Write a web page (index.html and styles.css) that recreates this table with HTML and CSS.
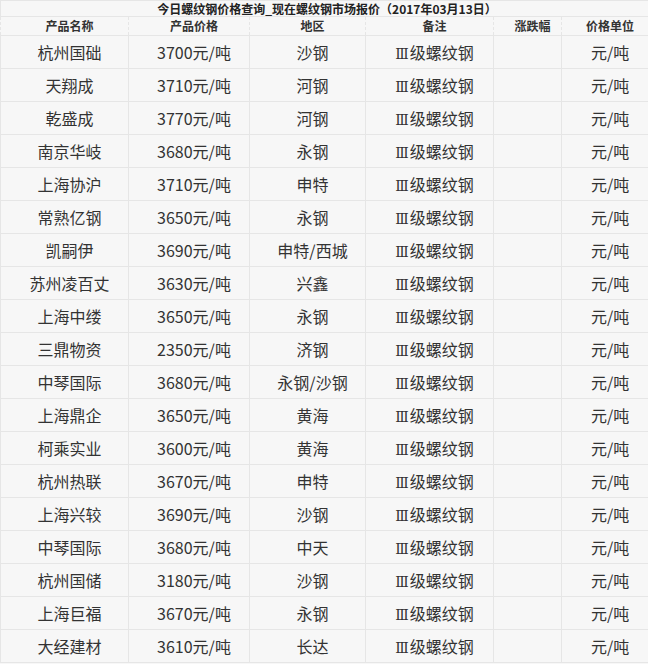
FILE: index.html
```html
<!DOCTYPE html>
<html lang="zh-CN">
<head>
<meta charset="utf-8">
<title>今日螺纹钢价格查询</title>
<link rel="stylesheet" href="styles.css">
</head>
<body>
<table class="price-table">
  <colgroup>
    <col class="c1"><col class="c2"><col class="c3"><col class="c4"><col class="c5"><col class="c6">
  </colgroup>
  <thead>
    <tr class="title-row"><th colspan="6">今日螺纹钢价格查询_现在螺纹钢市场报价（2017年03月13日）</th></tr>
    <tr class="head-row"><th>产品名称</th><th>产品价格</th><th>地区</th><th>备注</th><th>涨跌幅</th><th>价格单位</th></tr>
  </thead>
  <tbody>
    <tr><td>杭州国础</td><td>3700元/吨</td><td>沙钢</td><td><span class="roman">Ⅲ</span>级螺纹钢</td><td></td><td>元/吨</td></tr>
    <tr><td>天翔成</td><td>3710元/吨</td><td>河钢</td><td><span class="roman">Ⅲ</span>级螺纹钢</td><td></td><td>元/吨</td></tr>
    <tr><td>乾盛成</td><td>3770元/吨</td><td>河钢</td><td><span class="roman">Ⅲ</span>级螺纹钢</td><td></td><td>元/吨</td></tr>
    <tr><td>南京华岐</td><td>3680元/吨</td><td>永钢</td><td><span class="roman">Ⅲ</span>级螺纹钢</td><td></td><td>元/吨</td></tr>
    <tr><td>上海协沪</td><td>3710元/吨</td><td>申特</td><td><span class="roman">Ⅲ</span>级螺纹钢</td><td></td><td>元/吨</td></tr>
    <tr><td>常熟亿钢</td><td>3650元/吨</td><td>永钢</td><td><span class="roman">Ⅲ</span>级螺纹钢</td><td></td><td>元/吨</td></tr>
    <tr><td>凯嗣伊</td><td>3690元/吨</td><td>申特/西城</td><td><span class="roman">Ⅲ</span>级螺纹钢</td><td></td><td>元/吨</td></tr>
    <tr><td>苏州凌百丈</td><td>3630元/吨</td><td>兴鑫</td><td><span class="roman">Ⅲ</span>级螺纹钢</td><td></td><td>元/吨</td></tr>
    <tr><td>上海中缕</td><td>3650元/吨</td><td>永钢</td><td><span class="roman">Ⅲ</span>级螺纹钢</td><td></td><td>元/吨</td></tr>
    <tr><td>三鼎物资</td><td>2350元/吨</td><td>济钢</td><td><span class="roman">Ⅲ</span>级螺纹钢</td><td></td><td>元/吨</td></tr>
    <tr><td>中琴国际</td><td>3680元/吨</td><td>永钢/沙钢</td><td><span class="roman">Ⅲ</span>级螺纹钢</td><td></td><td>元/吨</td></tr>
    <tr><td>上海鼎企</td><td>3650元/吨</td><td>黄海</td><td><span class="roman">Ⅲ</span>级螺纹钢</td><td></td><td>元/吨</td></tr>
    <tr><td>柯乘实业</td><td>3600元/吨</td><td>黄海</td><td><span class="roman">Ⅲ</span>级螺纹钢</td><td></td><td>元/吨</td></tr>
    <tr><td>杭州热联</td><td>3670元/吨</td><td>申特</td><td><span class="roman">Ⅲ</span>级螺纹钢</td><td></td><td>元/吨</td></tr>
    <tr><td>上海兴较</td><td>3690元/吨</td><td>沙钢</td><td><span class="roman">Ⅲ</span>级螺纹钢</td><td></td><td>元/吨</td></tr>
    <tr><td>中琴国际</td><td>3680元/吨</td><td>中天</td><td><span class="roman">Ⅲ</span>级螺纹钢</td><td></td><td>元/吨</td></tr>
    <tr><td>杭州国储</td><td>3180元/吨</td><td>沙钢</td><td><span class="roman">Ⅲ</span>级螺纹钢</td><td></td><td>元/吨</td></tr>
    <tr><td>上海巨福</td><td>3670元/吨</td><td>永钢</td><td><span class="roman">Ⅲ</span>级螺纹钢</td><td></td><td>元/吨</td></tr>
    <tr><td>大经建材</td><td>3610元/吨</td><td>长达</td><td><span class="roman">Ⅲ</span>级螺纹钢</td><td></td><td>元/吨</td></tr>
  </tbody>
</table>
</body>
</html>
```
FILE: styles.css
```css
html, body {
  margin: 0;
  padding: 0;
  background: #f7f7f7;
}
body {
  font-family: "Microsoft YaHei", "Noto Sans CJK SC", "Noto Sans", sans-serif;
  color: #333;
}
.price-table {
  border-collapse: collapse;
  table-layout: fixed;
  width: 648px;
  background: #f7f7f7;
}
.c1 { width: 128px; }
.c2 { width: 121px; }
.c3 { width: 116px; }
.c4 { width: 128px; }
.c5 { width: 68px; }
.c6 { width: 87px; }
.price-table th,
.price-table td {
  border: 1px solid #e6e6e6;
  padding: 0 0 0 10px;
  text-align: center;
  white-space: nowrap;
  overflow: hidden;
}
.title-row th {
  height: 15px;
  line-height: 15px;
  font-size: 12px;
  font-weight: bold;
  color: #222;
  padding-left: 5px;
}
.head-row th {
  height: 18px;
  line-height: 18px;
  font-size: 12px;
  font-weight: bold;
  color: #333;
  border-left-style: dashed;
  border-right-style: dashed;
}
.price-table td {
  height: 32px;
  max-height: 32px;
  line-height: 32px;
  font-size: 16px;
  color: #333;
}
.roman {
  font-family: "DejaVu Serif", serif;
  font-size: 14px;
  line-height: 14px;
  margin-right: 1px;
}
```
